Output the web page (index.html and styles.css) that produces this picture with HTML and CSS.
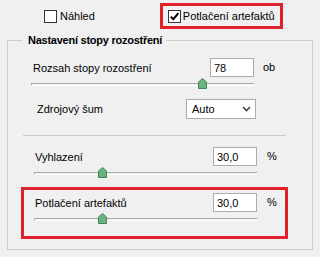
FILE: index.html
```html
<!DOCTYPE html>
<html lang="cs">
<head>
  <meta charset="UTF-8" />
  <meta name="viewport" content="width=device-width, initial-scale=1.0" />
  <title>Rozostření</title>
  <link rel="stylesheet" href="styles.css">
</head>
<body>
  <div class="top-row">
    <label class="check check-preview">
      <span class="box"></span>
      <span>Náhled</span>
    </label>
    <label class="check highlight">
      <span class="box">
        <svg width="11" height="11" viewBox="0 0 11 11"><path d="M1.8 5.6 L4.3 8.2 L9.4 2.2" fill="none" stroke="#000" stroke-width="2"/></svg>
      </span>
      <span>Potlačení artefaktů</span>
    </label>
  </div>

  <fieldset class="group">
    <legend>Nastavení stopy rozostření</legend>

    <!-- Rozsah -->
    <div class="param param-first">
      <div class="param-main">
        <div class="param-head">
          <span class="param-label">Rozsah stopy rozostření</span>
          <span class="field">78</span>
        </div>
        <div class="slider">
          <div class="track"></div>
          <svg class="thumb" style="left: 76.7%" width="9" height="11" viewBox="0 0 9 11"><path d="M0.5 4 L4.5 0.5 L8.5 4 L8.5 10.5 L0.5 10.5 Z" fill="#69b37e" stroke="#3f8556"/></svg>
        </div>
      </div>
      <span class="unit">ob</span>
    </div>

    <div class="param param-select">
      <div class="param-main">
        <div class="param-head">
          <span class="param-label">Zdrojový šum</span>
          <span class="dropdown">
            <span>Auto</span>
            <svg width="9" height="6" viewBox="0 0 9 6"><path d="M1 1 L4.5 4.5 L8 1" fill="none" stroke="#444" stroke-width="1.6"/></svg>
          </span>
        </div>
      </div>
    </div>

    <div class="separator"></div>

    <div class="param">
      <div class="param-main">
        <div class="param-head">
          <span class="param-label">Vyhlazení</span>
          <span class="field">30,0</span>
        </div>
        <div class="slider">
          <div class="track"></div>
          <svg class="thumb" style="left: 30.5%" width="9" height="11" viewBox="0 0 9 11"><path d="M0.5 4 L4.5 0.5 L8.5 4 L8.5 10.5 L0.5 10.5 Z" fill="#69b37e" stroke="#3f8556"/></svg>
        </div>
      </div>
      <span class="unit unit-pct">%</span>
    </div>

    <div class="highlight-box">
      <div class="param">
        <div class="param-main">
          <div class="param-head">
            <span class="param-label">Potlačení artefaktů</span>
            <span class="field">30,0</span>
          </div>
          <div class="slider">
            <div class="track"></div>
            <svg class="thumb" style="left: 30.5%" width="9" height="11" viewBox="0 0 9 11"><path d="M0.5 4 L4.5 0.5 L8.5 4 L8.5 10.5 L0.5 10.5 Z" fill="#69b37e" stroke="#3f8556"/></svg>
          </div>
        </div>
        <span class="unit unit-pct">%</span>
      </div>
    </div>
  </fieldset>
</body>
</html>
```

FILE: styles.css
```css
body {
  margin: 0;
  background-color: #f0f0f0;
  font-family: "Liberation Sans", Arial, sans-serif;
  font-size: 11px;
  color: #000;
}

/* top checkboxes */
.top-row {
  display: flex;
  align-items: center;
  padding-top: 3px;
  height: 26px;
}

.check {
  display: flex;
  align-items: center;
  gap: 3px;
}

.check-preview {
  margin-left: 44px;
  margin-right: 65px;
}

.box {
  width: 11px;
  height: 11px;
  border: 1px solid #333;
  background-color: #fff;
  display: flex;
  align-items: center;
  justify-content: center;
}

.highlight {
  box-sizing: border-box;
  height: 26px;
  border: 3px solid #e0212b;
  padding: 0 5px;
  gap: 2px;
}

/* group box */
.group {
  margin: 5px 7px 0 7px;
  padding: 0 0 10px 0;
  border: 1px solid #cdcdcd;
  min-width: 0;
}

.group legend {
  margin-left: 14px;
  padding: 0 4px 0 6px;
  font-weight: bold;
  line-height: 13px;
  letter-spacing: -0.25px;
}

.param {
  display: flex;
  align-items: flex-start;
  margin-left: 26px;
}

.param-first {
  margin-left: 23px;
  margin-top: 11px;
}

.param-main {
  width: 223px;
}

.param-head {
  display: flex;
  align-items: center;
  justify-content: space-between;
  height: 19px;
}

.param-label {
  padding-left: 1px;
}

.param-first .param-label {
  padding-left: 2px;
}

.field {
  box-sizing: border-box;
  width: 44px;
  height: 19px;
  border: 1px solid #acacac;
  background-color: #fff;
  padding: 2px 0 0 3px;
  line-height: 14px;
}

.unit {
  margin-left: 9px;
  line-height: 19px;
}

.unit-pct {
  margin-left: 10px;
}

.slider {
  position: relative;
  height: 12px;
  margin-top: 1px;
}

.track {
  position: absolute;
  left: 0;
  right: 0;
  top: 5px;
  height: 1px;
  border-top: 1px solid #a9a9a9;
  border-bottom: 1px solid #fff;
  border-left: 1px solid #a9a9a9;
}

.thumb {
  position: absolute;
  top: 0;
  margin-left: -4px;
}

.param-select {
  margin-top: 9px;
}

.param-select .param-main {
  width: 222px;
}

.param-select .param-label {
  padding-left: 3px;
}

.dropdown {
  box-sizing: border-box;
  width: 70px;
  height: 20px;
  border: 1px solid #acacac;
  background-color: #fff;
  display: flex;
  align-items: center;
  justify-content: space-between;
  padding: 0 4px 0 5px;
}

.separator {
  margin: 17px 26px 0 15px;
  border-top: 1px solid #c9c9c9;
}

.separator + .param {
  margin-top: 11px;
}

.highlight-box {
  margin: 8px 24px 0 13px;
  border: 3px solid #e0212b;
  padding: 3px 0 11px 0;
}

.highlight-box .param {
  margin-left: 10px;
}
```
